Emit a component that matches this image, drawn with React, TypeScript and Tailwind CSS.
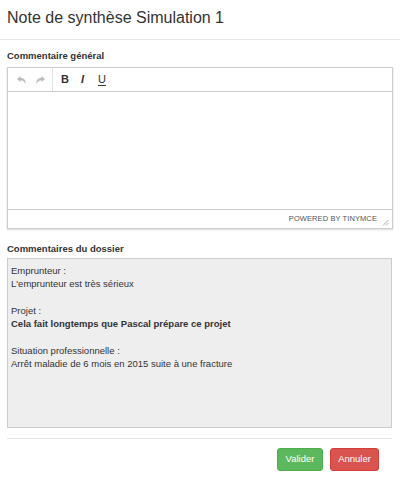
const App = () => {
  return (
    <div className="w-[400px] h-[488px] bg-white text-[#333] font-['Liberation_Sans',Arial,sans-serif]">
      <div className="h-[40px] border-b border-[#e5e5e5] px-[7px] flex items-center">
        <h4 className="text-[16px] leading-none pb-[4px]">Note de synthèse Simulation 1</h4>
      </div>
      <div className="px-[7px]">
        <label className="block text-[9.5px] leading-[12px] font-bold mt-[10px] mb-[5px]">Commentaire général</label>
        <div className="border border-[#ccc] shadow-[0_1px_2px_rgba(0,0,0,0.15)]">
          <div className="h-[24px] border-b border-[#ccc] flex items-center">
            <div className="flex items-center gap-[10px] pl-[9px] pr-[7px] h-full border-r border-[#e2e2e2]">
              <svg width="9" height="8" viewBox="0 0 9 8">
                <path d="M0 3 L3.5 0 L3.5 2 C7 2 9 4 8.5 8 C7.5 5.5 6 4.2 3.5 4.2 L3.5 6 Z" fill="#bbb" />
              </svg>
              <svg width="9" height="8" viewBox="0 0 9 8">
                <path d="M9 3 L5.5 0 L5.5 2 C2 2 0 4 0.5 8 C1.5 5.5 3 4.2 5.5 4.2 L5.5 6 Z" fill="#bbb" />
              </svg>
            </div>
            <div className="flex items-center gap-[12px] pl-[8px] text-[11px] text-[#333]">
              <span className="font-bold">B</span>
              <span className="italic font-bold">I</span>
              <span className="underline underline-offset-[2px] ml-[2px]">U</span>
            </div>
          </div>
          <div className="h-[117px]"></div>
          <div className="h-[19px] border-t border-[#ccc] flex items-center justify-end pr-[3px]">
            <span className="text-[7.5px] uppercase text-[#555] tracking-[0.1px]">Powered by TinyMCE</span>
            <svg width="8" height="8" viewBox="0 0 8 8" className="ml-[4px] mt-[5px]">
              <path d="M7.5 2 L2 7.5 M7.5 5 L5 7.5" stroke="#aaa" strokeWidth="1" />
            </svg>
          </div>
        </div>
        <label className="block text-[9.5px] leading-[12px] font-bold mt-[14px] mb-[3px]">Commentaires du dossier</label>
        <div className="h-[170px] bg-[#eee] border border-[#ccc] px-[3px] py-[5px] text-[9.5px] leading-[13px] mr-[1px]">
          <p>Emprunteur :</p>
          <p>L'emprunteur est très sérieux</p>
          <p className="mt-[14px]">Projet :</p>
          <p className="font-bold">Cela fait longtemps que Pascal prépare ce projet</p>
          <p className="mt-[14px]">Situation professionnelle :</p>
          <p>Arrêt maladie de 6 mois en 2015 suite à une fracture</p>
        </div>
        <div className="mt-[10px] border-t border-[#e5e5e5] mr-[1px] pt-[9px] flex justify-end gap-[7px] pr-[13px]">
          <button className="h-[23px] w-[46px] rounded-[3px] bg-[#5cb85c] border border-[#4cae4c] text-white text-[9.5px]">Valider</button>
          <button className="h-[23px] w-[49px] rounded-[3px] bg-[#d9534f] border border-[#d43f3a] text-white text-[9.5px]">Annuler</button>
        </div>
      </div>
    </div>
  );
};

export default App;
